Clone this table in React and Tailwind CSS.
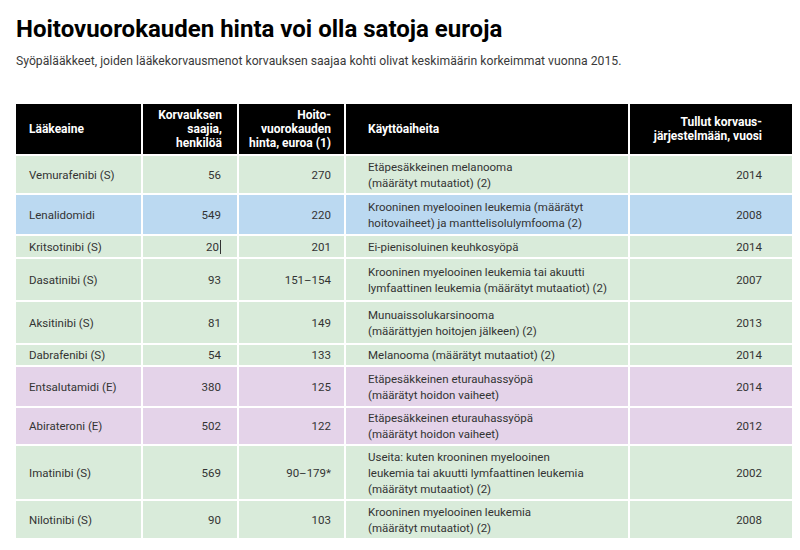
import React from "react";

const rows = [
  { name: "Vemurafenibi (S)", n: "56", price: "270", use: ["Etäpesäkkeinen melanooma", "(määrätyt mutaatiot) (2)"], year: "2014", bg: "bg-[#d9ebda]", h: "h-[37px]" },
  { name: "Lenalidomidi", n: "549", price: "220", use: ["Krooninen myelooinen leukemia (määrätyt", "hoitovaiheet) ja manttelisolulymfooma (2)"], year: "2008", bg: "bg-[#bbd9f1]", h: "h-[39px]" },
  { name: "Kritsotinibi (S)", n: "20", cursor: true, price: "201", use: ["Ei-pienisoluinen keuhkosyöpä"], year: "2014", bg: "bg-[#d9ebda]", h: "h-[21px]" },
  { name: "Dasatinibi (S)", n: "93", price: "151–154", use: ["Krooninen myelooinen leukemia tai akuutti", "lymfaattinen leukemia (määrätyt mutaatiot) (2)"], year: "2007", bg: "bg-[#d9ebda]", h: "h-[41px]" },
  { name: "Aksitinibi (S)", n: "81", price: "149", use: ["Munuaissolukarsinooma", "(määrättyjen hoitojen jälkeen) (2)"], year: "2013", bg: "bg-[#d9ebda]", h: "h-[41px]" },
  { name: "Dabrafenibi (S)", n: "54", price: "133", use: ["Melanooma (määrätyt mutaatiot) (2)"], year: "2014", bg: "bg-[#d9ebda]", h: "h-[20px]" },
  { name: "Entsalutamidi (E)", n: "380", price: "125", use: ["Etäpesäkkeinen eturauhassyöpä", "(määrätyt hoidon vaiheet)"], year: "2014", bg: "bg-[#e4d3e9]", h: "h-[39px]" },
  { name: "Abirateroni (E)", n: "502", price: "122", use: ["Etäpesäkkeinen eturauhassyöpä", "(määrätyt hoidon vaiheet)"], year: "2012", bg: "bg-[#e4d3e9]", h: "h-[36px]" },
  { name: "Imatinibi (S)", n: "569", price: "90–179*", use: ["Useita: kuten krooninen myelooinen", "leukemia tai akuutti lymfaattinen leukemia", "(määrätyt mutaatiot) (2)"], year: "2002", bg: "bg-[#d9ebda]", h: "h-[53px]" },
  { name: "Nilotinibi (S)", n: "90", price: "103", use: ["Krooninen myelooinen leukemia", "(määrätyt mutaatiot) (2)"], year: "2008", bg: "bg-[#d9ebda]", h: "h-[37px]" },
];

const cols = "grid grid-cols-[125px_94px_105px_282px_162px] gap-x-[2px]";

export default function App() {
  return (
    <div className="w-[800px] h-[550px] bg-white overflow-hidden font-['Roboto',sans-serif] text-[#333]">
      <div className="pl-4 pt-[15px]">
        <h1 className="text-[24px] leading-[28px] font-bold text-black">
          Hoitovuorokauden hinta voi olla satoja euroja
        </h1>
        <p className="mt-[10px] text-[12.2px] leading-[16px] text-[#3a3a3a]">
          Syöpälääkkeet, joiden lääkekorvausmenot korvauksen saajaa kohti olivat keskimäärin korkeimmat vuonna 2015.
        </p>
      </div>
      <div className="ml-4 mt-[35px] flex flex-col gap-y-[2px] w-[776px] text-[11.5px] leading-[16px]">
        <div className={`${cols} h-[50px] text-white font-bold text-[12px] leading-[14px]`}>
          <div className="bg-black flex items-center pl-[13px]">Lääkeaine</div>
          <div className="bg-black flex flex-col justify-center items-end pr-[15px] text-right">
            <span>Korvauksen</span>
            <span>saajia,</span>
            <span>henkilöä</span>
          </div>
          <div className="bg-black flex flex-col justify-center items-end pr-[13px] text-right">
            <span>Hoito-</span>
            <span>vuorokauden</span>
            <span>hinta, euroa (1)</span>
          </div>
          <div className="bg-black flex items-center pl-[22px]">Käyttöaiheita</div>
          <div className="bg-black flex flex-col justify-center items-end pr-[30px] text-right">
            <span>Tullut korvaus-</span>
            <span>järjestelmään, vuosi</span>
          </div>
        </div>
        {rows.map((r) => (
          <div key={r.name} className={`${cols} ${r.h}`}>
            <div className={`${r.bg} flex items-center pl-[13px]`}>{r.name}</div>
            <div className={`${r.bg} flex items-center justify-end pr-[16px]`}>
              {r.n}
              {r.cursor && <span className="ml-px inline-block w-px h-[14px] bg-[#333]" />}
            </div>
            <div className={`${r.bg} flex items-center justify-end pr-[13px]`}>{r.price}</div>
            <div className={`${r.bg} flex flex-col justify-center pl-[22px]`}>
              {r.use.map((l, i) => (
                <span key={i}>{l}</span>
              ))}
            </div>
            <div className={`${r.bg} flex items-center justify-end pr-[30px]`}>{r.year}</div>
          </div>
        ))}
      </div>
    </div>
  );
}
